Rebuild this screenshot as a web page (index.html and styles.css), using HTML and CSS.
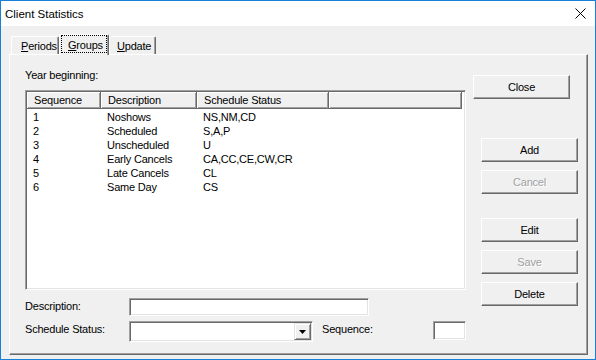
FILE: index.html
```
<!DOCTYPE html>
<html>
<head>
<meta charset="utf-8">
<link rel="stylesheet" href="styles.css">
</head>
<body>
<div class="window">
  <div class="titlebar">
    <span class="title">Client Statistics</span>
    <svg class="close-x" width="11" height="11" viewBox="0 0 11 11"><path d="M0.5 0.5 L10.5 10.5 M10.5 0.5 L0.5 10.5" stroke="#000" stroke-width="1" fill="none"/></svg>
  </div>
  <div class="client">
    <div class="tabs">
      <div class="tab tab-periods"><span><u>P</u>eriods</span></div>
      <div class="tab active"><span class="focus"><u>G</u>roups</span></div>
      <div class="tab tab-update"><span><u>U</u>pdate</span></div>
    </div>
    <div class="panel">
      <div class="left">
        <div class="label-year">Year beginning:</div>
        <div class="list">
          <div class="list-head">
            <div class="hcell w1">Sequence</div>
            <div class="hcell w2">Description</div>
            <div class="hcell w3">Schedule Status</div>
            <div class="hcell w4"></div>
          </div>
          <div class="list-body">
            <div class="row"><div class="cell w1">1</div><div class="cell w2">Noshows</div><div class="cell w3">NS,NM,CD</div></div>
            <div class="row"><div class="cell w1">2</div><div class="cell w2">Scheduled</div><div class="cell w3">S,A,P</div></div>
            <div class="row"><div class="cell w1">3</div><div class="cell w2">Unscheduled</div><div class="cell w3">U</div></div>
            <div class="row"><div class="cell w1">4</div><div class="cell w2">Early Cancels</div><div class="cell w3">CA,CC,CE,CW,CR</div></div>
            <div class="row"><div class="cell w1">5</div><div class="cell w2">Late Cancels</div><div class="cell w3">CL</div></div>
            <div class="row"><div class="cell w1">6</div><div class="cell w2">Same Day</div><div class="cell w3">CS</div></div>
          </div>
        </div>
        <div class="form-row desc-row">
          <div class="form-label">Description:</div>
          <div class="field desc-field"></div>
        </div>
        <div class="form-row sched-row">
          <div class="form-label">Schedule Status:</div>
          <div class="field combo">
            <div class="combo-btn"><svg width="7" height="4" viewBox="0 0 7 4"><polygon points="0,0 7,0 3.5,4" fill="#000"/></svg></div>
          </div>
          <div class="seq-label">Sequence:</div>
          <div class="field seq-box"></div>
        </div>
      </div>
      <div class="right">
        <div class="btn btn-close">Close</div>
        <div class="btn btn-add">Add</div>
        <div class="btn disabled gap8">Cancel</div>
        <div class="btn btn-edit">Edit</div>
        <div class="btn disabled gap8">Save</div>
        <div class="btn gap8">Delete</div>
      </div>
    </div>
  </div>
</div>
</body>
</html>
```
FILE: styles.css
```
html, body {
  margin: 0;
  padding: 0;
  background: #f0f0f0;
}

.window {
  box-sizing: border-box;
  width: 596px;
  height: 360px;
  border: 1px solid #1a7fd6;
  background: #f0f0f0;
  display: flex;
  flex-direction: column;
  font-family: "Liberation Sans", Arial, sans-serif;
  font-size: 11px;
  letter-spacing: -0.2px;
  color: #000;
}

.titlebar {
  flex: none;
  height: 25px;
  background: #fff;
  display: flex;
  align-items: center;
  padding: 0 9px 0 4px;
}

.title {
  flex: 1;
  font-size: 11.5px;
  letter-spacing: 0;
}

.close-x {
  flex: none;
  display: block;
}

.client {
  flex: 1;
  display: flex;
  flex-direction: column;
  padding: 8px 7px 4px 8px;
}

.tabs {
  flex: none;
  height: 20px;
  display: flex;
  align-items: flex-end;
  padding-left: 2px;
}

.tab {
  box-sizing: border-box;
  height: 18px;
  border-top: 1px solid #fff;
  border-left: 1px solid #fff;
  border-right: 1px solid #696969;
  border-radius: 2px 2px 0 0;
  box-shadow: inset -1px 0 #a0a0a0;
  display: flex;
  align-items: center;
  padding: 1px 0 0 9px;
  white-space: nowrap;
}

.tab-periods {
  width: 48px;
}

.tab-update {
  width: 47px;
  padding-left: 7px;
}

.tab.active {
  width: 50px;
  height: 21px;
  margin-bottom: -1px;
  position: relative;
  z-index: 1;
  background: #f0f0f0;
  padding: 0 1px 2px 1px;
  align-items: stretch;
}

.focus {
  flex: 1;
  display: flex;
  align-items: center;
  border: 1px dotted #000;
  padding: 1px 0 0 6px;
}

.panel {
  flex: 1;
  box-sizing: border-box;
  border: 1px solid;
  border-color: #fff #696969 #696969 #fff;
  box-shadow: inset -1px -1px #a0a0a0;
  display: flex;
  padding: 14px 0 0 15px;
}

.left {
  width: 441px;
  flex: none;
  display: flex;
  flex-direction: column;
}

.label-year {
  height: 13px;
  line-height: 13px;
}

.list {
  margin-top: 8px;
  height: 200px;
  box-sizing: border-box;
  border: 1px solid;
  border-color: #a0a0a0 #fff #fff #a0a0a0;
  box-shadow: inset 1px 1px #696969, inset -1px -1px #e3e3e3;
  background: #fff;
  padding: 1px;
}

.list-head {
  display: flex;
  height: 17px;
}

.hcell {
  box-sizing: border-box;
  height: 17px;
  background: #f0f0f0;
  border-right: 1px solid #696969;
  border-bottom: 1px solid #696969;
  box-shadow: inset 1px 1px #fff, inset -1px -1px #a0a0a0;
  padding-left: 7px;
  line-height: 16px;
  white-space: nowrap;
}

.w1 { width: 74px; }
.w2 { width: 96px; }
.w3 { width: 132px; }
.w4 { width: 133px; }

.list-body {
  padding-top: 1px;
}

.row {
  display: flex;
  height: 14px;
  line-height: 14px;
}

.cell {
  box-sizing: border-box;
  padding-left: 6px;
  white-space: nowrap;
}

.form-row {
  display: flex;
  align-items: flex-start;
}

.desc-row {
  margin-top: 8px;
}

.sched-row {
  margin-top: 5px;
}

.form-label {
  width: 104px;
  flex: none;
  line-height: 13px;
}

.desc-row .form-label {
  margin-top: 2px;
}

.sched-row .form-label {
  margin-top: 2px;
}

.field {
  box-sizing: border-box;
  border: 1px solid;
  border-color: #a0a0a0 #fff #fff #a0a0a0;
  box-shadow: inset 1px 1px #696969, inset -1px -1px #e3e3e3;
  background: #fff;
}

.desc-field {
  width: 240px;
  height: 18px;
}

.combo {
  width: 184px;
  height: 21px;
  display: flex;
  justify-content: flex-end;
  padding: 1px;
}

.combo-btn {
  box-sizing: border-box;
  width: 17px;
  height: 17px;
  background: #f0f0f0;
  border: 1px solid;
  border-color: #e3e3e3 #696969 #696969 #e3e3e3;
  box-shadow: inset 1px 1px #fff, inset -1px -1px #a0a0a0;
  display: flex;
  align-items: center;
  justify-content: center;
}

.combo-btn svg {
  display: block;
}

.seq-label {
  margin-left: 9px;
  margin-top: 2px;
  line-height: 13px;
}

.seq-box {
  margin-left: auto;
  width: 33px;
  height: 19px;
}

.right {
  flex: none;
  margin-left: 7px;
  padding-top: 6px;
  display: flex;
  flex-direction: column;
  width: 105px;
}

.btn {
  box-sizing: border-box;
  width: 97px;
  height: 24px;
  margin-left: 8px;
  border: 1px solid;
  border-color: #fff #696969 #696969 #fff;
  box-shadow: inset -1px -1px #a0a0a0;
  background: #f0f0f0;
  display: flex;
  align-items: center;
  justify-content: center;
  white-space: nowrap;
}

.btn-close {
  margin-left: 0;
}

.btn-add {
  margin-top: 39px;
}

.btn-edit {
  margin-top: 24px;
}

.gap8 {
  margin-top: 8px;
}

.disabled {
  color: #a0a0a0;
  text-shadow: 1px 1px 0 #fff;
}
```
